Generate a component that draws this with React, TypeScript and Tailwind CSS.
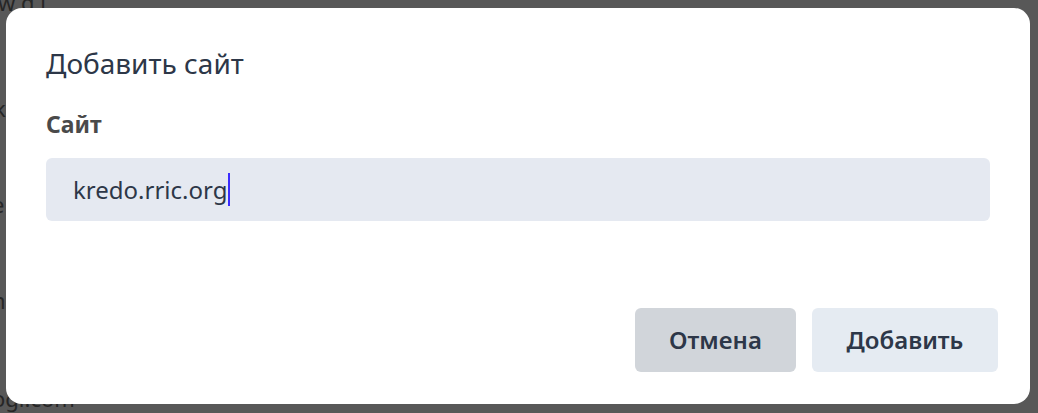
export default function App() {
  return (
    <div
      className="relative h-[413px] w-[1038px] overflow-hidden bg-[#585858]"
      style={{ fontFamily: '"Noto Sans", "Open Sans", sans-serif' }}
    >
      <div className="absolute inset-0 text-[22px] text-[#262626]">
        <div className="absolute left-[-2px] top-[-14px]">w d l</div>
        <div className="absolute left-[-6px] top-[92px]">k</div>
        <div className="absolute left-[-8px] top-[188px]">e</div>
        <div className="absolute left-[-8px] top-[284px]">n</div>
        <div className="absolute left-[-8px] top-[382px]">ogl.com</div>
      </div>
      <div className="absolute left-[6px] top-[8px] flex h-[396px] w-[1024px] flex-col rounded-[16px] bg-white pl-[40px] pr-[32px] pt-[37px] pb-[32px]">
        <div className="text-[28px] leading-[36px] text-[#2d3748]">Добавить сайт</div>
        <div className="mt-[28px] text-[23px] font-bold leading-[30px] text-[#4a4a4a]">Сайт</div>
        <div className="mt-[19px] mr-[8px] flex h-[63px] items-center rounded-[6px] bg-[#e5e9f1] pl-[27px]">
          <span className="text-[24px] text-[#2d3748]">kredo.rric.org</span>
          <span className="ml-[1px] h-[33px] w-[2px] bg-[#3b2bff]" />
        </div>
        <div className="mt-auto flex justify-end gap-[16px]">
          <button className="h-[64px] w-[161px] rounded-[6px] bg-[#d1d5da] text-[24px] font-semibold text-[#2d3748]">
            Отмена
          </button>
          <button className="h-[64px] w-[186px] rounded-[6px] bg-[#e5ebf2] text-[24px] font-semibold text-[#2d3748]">
            Добавить
          </button>
        </div>
      </div>
    </div>
  );
}
